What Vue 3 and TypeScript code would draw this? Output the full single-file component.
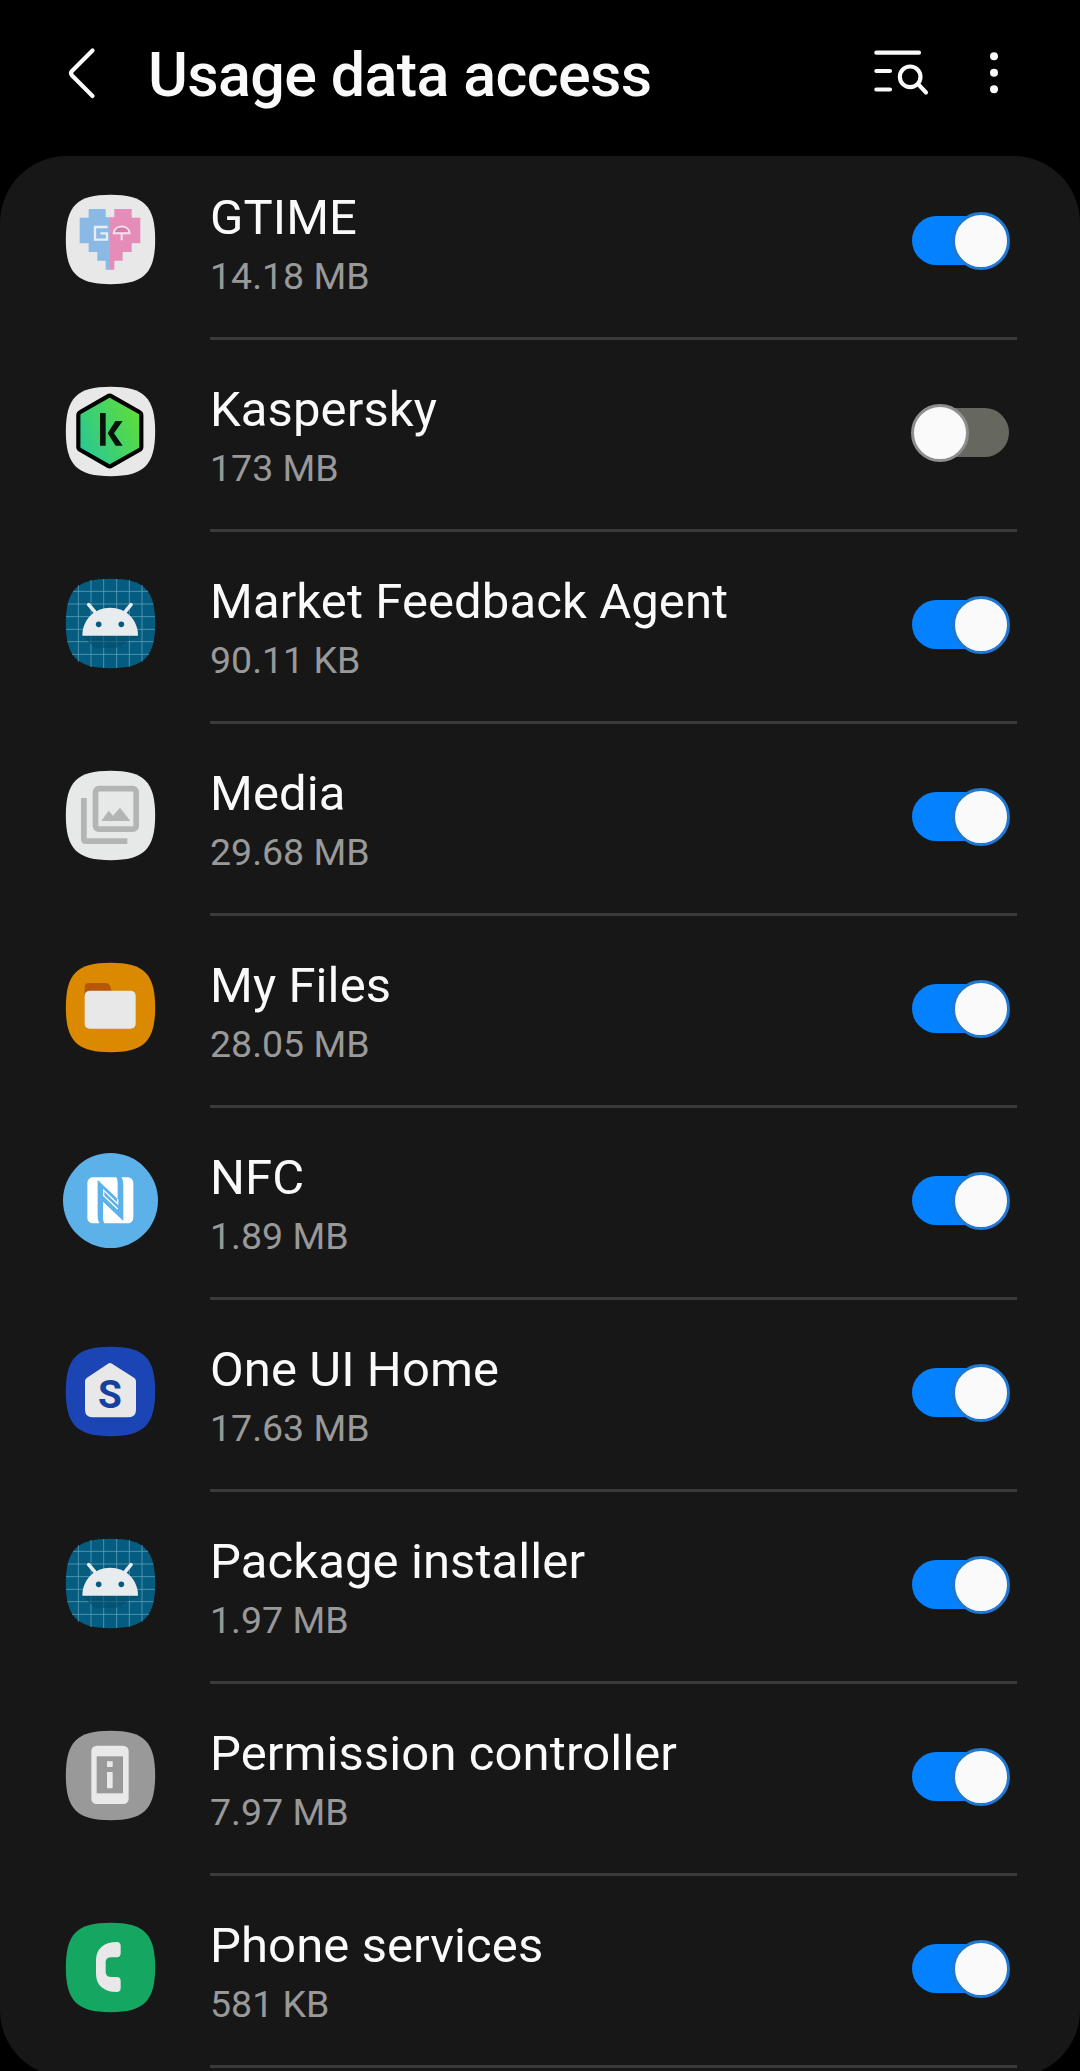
<script setup lang="ts">
import { ref } from 'vue'

type IconName =
  | 'gtime' | 'kaspersky' | 'android' | 'media' | 'files'
  | 'nfc' | 'home' | 'permission' | 'phone'

interface AppEntry {
  name: string
  size: string
  icon: IconName
  enabled: boolean
}

const tileColors: Record<IconName, string> = {
  gtime: '#e8e8e8',
  kaspersky: '#e8e8e8',
  android: '#045d80',
  media: '#e7e8e8',
  files: '#da8900',
  nfc: '#5bb1e8',
  home: '#1b45b4',
  permission: '#999999',
  phone: '#15a762',
}

const apps = ref<AppEntry[]>([
  { name: 'GTIME', size: '14.18 MB', icon: 'gtime', enabled: true },
  { name: 'Kaspersky', size: '173 MB', icon: 'kaspersky', enabled: false },
  { name: 'Market Feedback Agent', size: '90.11 KB', icon: 'android', enabled: true },
  { name: 'Media', size: '29.68 MB', icon: 'media', enabled: true },
  { name: 'My Files', size: '28.05 MB', icon: 'files', enabled: true },
  { name: 'NFC', size: '1.89 MB', icon: 'nfc', enabled: true },
  { name: 'One UI Home', size: '17.63 MB', icon: 'home', enabled: true },
  { name: 'Package installer', size: '1.97 MB', icon: 'android', enabled: true },
  { name: 'Permission controller', size: '7.97 MB', icon: 'permission', enabled: true },
  { name: 'Phone services', size: '581 KB', icon: 'phone', enabled: true },
])
</script>

<template>
  <main class="screen">
    <header class="bar">
      <svg class="back" viewBox="0 0 40 60" fill="none" stroke="#fafafa" stroke-width="4.2" stroke-linecap="round" stroke-linejoin="round">
        <path d="M33.500 7.500 L13 28 Q11 30 13 32.500 L33.500 53" />
      </svg>
      <h1 class="title">Usage data access</h1>
      <svg class="find" viewBox="96 84 174 144" fill="none" stroke="#fafafa" stroke-width="12.500" stroke-linecap="round">
        <path d="M109 98H237M109 153H150M109 208.500H150M235 193L258 217.500" />
        <circle cx="210.500" cy="170.500" r="31" />
      </svg>
      <svg class="more" viewBox="445 90 36 135" fill="#fafafa">
        <circle cx="463" cy="109" r="12" />
        <circle cx="463" cy="158.500" r="12" />
        <circle cx="463" cy="207.500" r="12" />
      </svg>
    </header>

    <ul class="card">
      <li v-for="app in apps" :key="app.name" class="row">
        <svg class="icon" viewBox="0 0 288 288">
          <circle v-if="app.icon === 'nfc'" cx="142.500" cy="148.500" r="142.500" :fill="tileColors.nfc" />
          <path
            v-else
            d="M142.500 11.500C242.500 11.500 276.500 45 276.500 145.500S242.500 279.500 142.500 279.500 8.500 246 8.500 145.500 42.500 11.500 142.500 11.500Z"
            :fill="tileColors[app.icon]"
          />

          <g v-if="app.icon === 'gtime'" transform="translate(-39 -33)">
            <path fill="#8bb9e6" d="M116 87H167V112H180V269H167V242H142V216H116V190H89V113H116Z" />
            <path fill="#e68cb9" d="M193 87H245V113H271V190H245V216H218V242H193V269H180V112H193Z" />
            <path fill="none" stroke="#e9edf2" stroke-width="7" d="M173 141H135V179H171V160H151" />
            <path fill="#dc78a8" stroke="#f5e2ec" stroke-width="6" d="M191 160C193 133 237 133 239 160Z" />
            <path stroke="#f5e2ec" stroke-width="6" d="M215 160V181" />
          </g>

          <g v-else-if="app.icon === 'kaspersky'" transform="translate(-39 -39)">
            <defs>
              <linearGradient id="kasperskyFill" x1="0" y1="0.800" x2="1" y2="0.200">
                <stop offset="0" stop-color="#28c696" />
                <stop offset="0.550" stop-color="#46d463" />
                <stop offset="1" stop-color="#62de34" />
              </linearGradient>
            </defs>
            <path
              d="M173 79Q179 75 185 79L268 126Q274 129 274 136V231Q274 237 268 240L185 287Q179 291 173 287L91 240Q85 237 85 231V136Q85 129 91 126Z"
              fill="url(#kasperskyFill)" stroke="#000" stroke-width="12.500" stroke-linejoin="round"
            />
            <path fill="#04140a" d="M150 129H167V227H150ZM196 153H218L192 190L218 227H197L173 190Z" />
          </g>

          <g v-else-if="app.icon === 'android'" transform="translate(-39 -30)">
            <path
              fill="none" stroke="#5c9bb3" stroke-width="2.500"
              d="M85 61V290M123 45V306M161 42V309M200 42V309M238 45V306M276 60V290M69 79H294M53 117H310M48 155H315M48 193H315M52 230H311M66 268H297"
            />
            <path fill="#034c6c" fill-opacity=".6" d="M97 212L134 249H200L264 213Z" />
            <path fill="#e8ecee" d="M97 212C97 163 134 128 180.500 128S264 163 264 212Z" />
            <path stroke="#e8ecee" stroke-width="11" stroke-linecap="round" d="M116 119L136 142M243 119L224 142" />
            <circle cx="146" cy="178" r="8.500" fill="#045d80" />
            <circle cx="214" cy="178" r="8.500" fill="#045d80" />
          </g>

          <g v-else-if="app.icon === 'media'" transform="translate(-39 -36)">
            <rect x="136.500" y="101" width="122" height="121.500" rx="10" fill="none" stroke="#b2b5b4" stroke-width="17" />
            <path fill="#b2b5b4" d="M93 129H110V250H232V267H107Q93 267 93 253ZM154 198L176 167L189 182L210 158L241 198Z" />
          </g>

          <g v-else-if="app.icon === 'files'" transform="translate(-39 -27)">
            <path fill="#b65606" d="M104 138V112Q104 99 117 99H168Q177 99 180 107L185 124V138Z" />
            <rect x="104" y="122" width="153" height="114" rx="15" fill="#e8e8e8" />
          </g>

          <g v-else-if="app.icon === 'nfc'" transform="translate(-39 -33)">
            <rect x="112" y="112" width="138" height="138" rx="16" fill="#fff" />
            <path
              fill="#5bb1e8"
              d="M143 120L203 177V127Q203 116 198 110H214Q220 119 220 134V243L159 185V233Q159 245 164 252H149Q143 242 143 229Z"
            />
            <path fill="none" stroke="#fff" stroke-width="4" d="M203 177V191L161 151V167L203 207" />
          </g>

          <g v-else-if="app.icon === 'home'" transform="translate(-39 -39)">
            <path fill="#e8e8e8" d="M174 101Q180 97 186 101L252 143Q258 147 258 154V240Q258 262 236 262H127Q105 262 105 240V154Q105 147 111 143Z" />
            <text x="180" y="234" text-anchor="middle" class="home-letter">S</text>
          </g>

          <g v-else-if="app.icon === 'permission'" transform="translate(-39 -36)">
            <rect x="124" y="92" width="112" height="175" rx="16" fill="#e9e9e9" />
            <rect x="140" y="124" width="79" height="111" fill="#999" />
            <path fill="#e9e9e9" d="M171 139H188V156H171ZM171 171H188V220H171Z" />
          </g>

          <g v-else transform="translate(-189 -57)">
            <path
              fill="#e8e8e8"
              d="M350 126Q362 126 362 138V160Q362 172 350 172H334Q317 172 317 187V215Q317 231 334 231H350Q362 231 362 243V264Q362 276 350 276C310 276 288 254 288 222V181C288 147 311 126 350 126Z"
            />
          </g>
        </svg>

        <div class="content">
          <div class="labels">
            <span class="name">{{ app.name }}</span>
            <span class="size">{{ app.size }}</span>
          </div>
          <button
            class="toggle"
            :class="{ on: app.enabled }"
            role="switch"
            :aria-checked="app.enabled"
            :aria-label="app.name"
            @click="app.enabled = !app.enabled"
          >
            <span class="thumb"></span>
          </button>
        </div>
      </li>
    </ul>
  </main>
</template>

<style>
body {
  margin: 0;
  background: #000;
}
</style>

<style scoped>
.screen {
  width: 1080px;
  height: 2071px;
  overflow: hidden;
  background: #000;
  color: #fafafa;
  font-family: Roboto, "Noto Sans", sans-serif;
}

.bar {
  box-sizing: border-box;
  height: 156px;
  display: flex;
  align-items: flex-start;
  padding: 43px 69px 0 59px;
}

.back {
  width: 40px;
  height: 60px;
  flex: none;
}

.title {
  margin: -4px 0 0 49px;
  flex: 1;
  font-size: 61px;
  line-height: 73px;
  font-weight: 500;
  letter-spacing: -0.630px;
  white-space: nowrap;
}

.find {
  width: 58px;
  height: 48px;
  margin-top: 5px;
  flex: none;
}

.more {
  width: 12px;
  height: 45px;
  margin: 7px 11px 0 58px;
  flex: none;
}

.card {
  box-sizing: border-box;
  height: 1921px;
  margin: 0;
  padding: 0;
  list-style: none;
  background: #171717;
  border-radius: 67px;
  overflow: hidden;
}

.row {
  display: flex;
  height: 192px;
  padding: 0 63px;
}

/* The list is scrolled a few pixels under the card's upper edge. */
.row:first-child {
  margin-top: -8px;
}

.icon {
  width: 96px;
  height: 96px;
  margin: 43px 51px 0 0;
  overflow: visible;
  flex: none;
}

.home-letter {
  font-family: Roboto, sans-serif;
  font-size: 116px;
  font-weight: 700;
  fill: #173f9f;
}

.content {
  box-sizing: border-box;
  flex: 1;
  display: flex;
  justify-content: space-between;
  border-bottom: 3px solid #3a3a3a;
}

.labels {
  display: flex;
  flex-direction: column;
  gap: 8px;
  padding-top: 41px;
  white-space: nowrap;
}

.name {
  font-size: 49px;
  line-height: 57px;
  letter-spacing: 0.100px;
}

.size {
  font-size: 37.500px;
  line-height: 44px;
  color: #999;
}

.toggle {
  box-sizing: border-box;
  width: 97px;
  height: 49px;
  margin: 68px 8px 0 0;
  padding: 0;
  border: 0;
  border-radius: 25px;
  background: #66675f;
  display: flex;
  align-items: center;
  flex: none;
}

.thumb {
  box-sizing: border-box;
  width: 58px;
  height: 58px;
  margin: 0 -1px;
  border: 3px solid #8e8e8e;
  border-radius: 50%;
  background: #fafafa;
  flex: none;
}

.toggle.on {
  justify-content: flex-end;
  background: #0381fe;
}

.toggle.on .thumb {
  border-color: #1f78d2;
}
</style>
